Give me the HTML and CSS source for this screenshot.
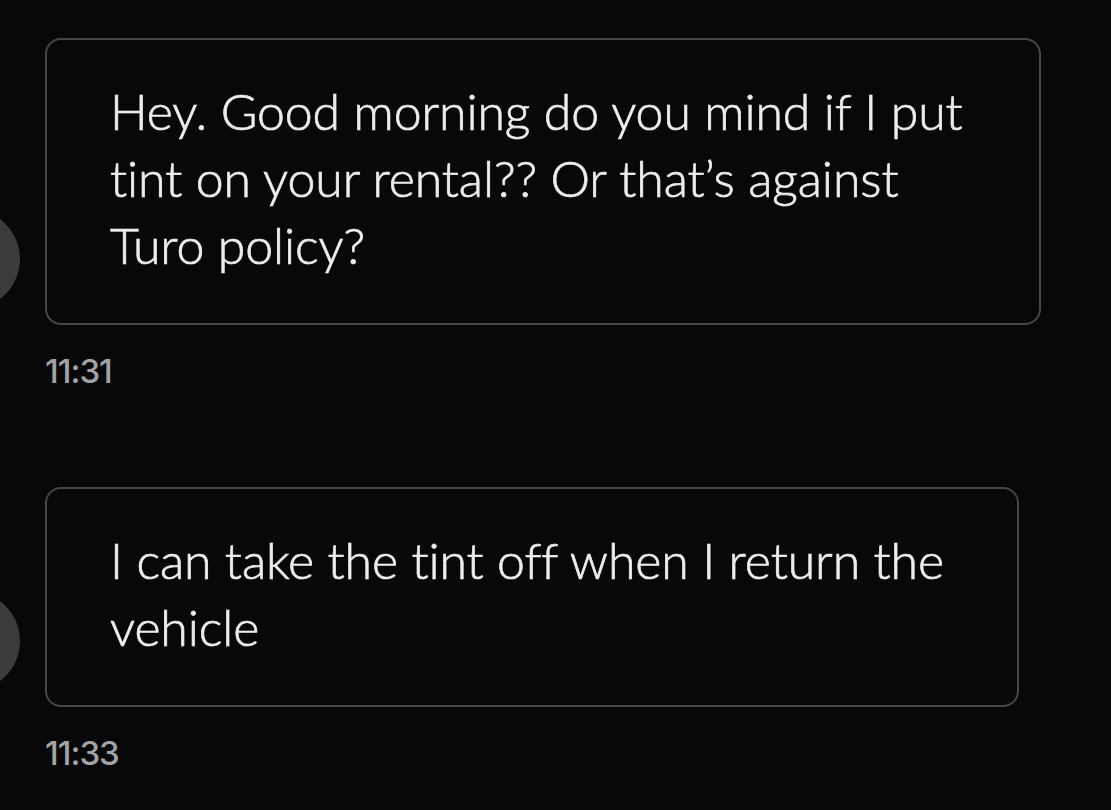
FILE: index.html
```html
<!DOCTYPE html>
<html lang="en">
<head>
<meta charset="utf-8">
<title>Messages</title>
<link rel="stylesheet" href="styles.css">
</head>
<body>
<main class="thread">
  <section class="msg msg-first">
    <div class="row">
      <div class="avatar"></div>
      <div class="bubble bubble-wide">Hey. Good morning do you mind if I put tint on your rental?? Or that’s against Turo policy?</div>
    </div>
    <div class="time">11:31</div>
  </section>
  <section class="msg msg-second">
    <div class="row">
      <div class="avatar"></div>
      <div class="bubble bubble-narrow">I can take the tint off when I return the vehicle</div>
    </div>
    <div class="time">11:33</div>
  </section>
</main>
</body>
</html>
```

FILE: styles.css
```css
html, body {
  margin: 0;
  padding: 0;
  background: #08080a;
  overflow: hidden;
}

.thread {
  display: flex;
  flex-direction: column;
  padding-top: 38px;
  width: 1111px;
  height: 810px;
  box-sizing: border-box;
  overflow: hidden;
}

.msg {
  display: flex;
  flex-direction: column;
}

.msg-second {
  margin-top: 96px;
}

.row {
  display: flex;
  align-items: flex-end;
  gap: 25px;
}

.avatar {
  flex: none;
  width: 100px;
  height: 100px;
  margin-left: -80px;
  margin-bottom: 16px;
  border-radius: 50%;
  background: #3b3b3d;
}

.bubble {
  box-sizing: border-box;
  border: 2px solid #47474a;
  border-radius: 16px;
  padding: 38px 40px 44px 63px;
  font-family: "Lato", "Noto Sans", sans-serif;
  font-weight: 300;
  font-size: 50px;
  line-height: 67px;
  letter-spacing: -0.1px;
  color: #ededed;
  -webkit-text-stroke: 0.7px #ededed;
  font-variant-ligatures: none;
  font-feature-settings: "liga" 0, "clig" 0;
}

.bubble-wide {
  width: 996px;
}

.bubble-narrow {
  width: 974px;
}

.time {
  margin-left: 45px;
  margin-top: 26px;
  font-family: "Inter", "Liberation Sans", sans-serif;
  font-weight: 500;
  font-size: 33px;
  line-height: 40px;
  color: #a3a3a5;
  letter-spacing: -1px;
}
```
